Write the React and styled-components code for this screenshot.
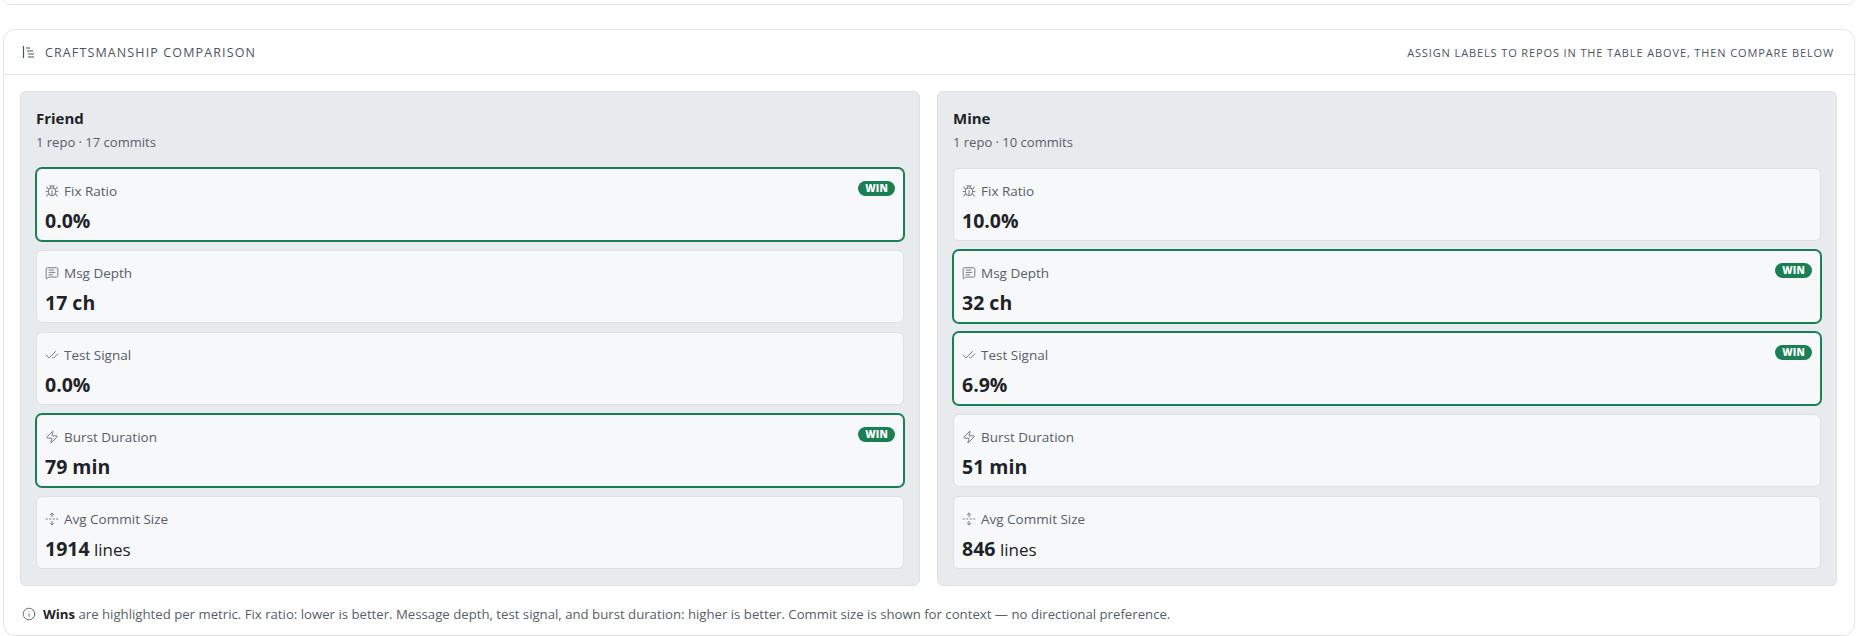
import React from "react";
import styled, { createGlobalStyle } from "styled-components";
import { Bug, MessageSquareText, CheckCheck, Zap, UnfoldVertical, Info } from "lucide-react";

const Global = createGlobalStyle`
  body { margin: 0; background: #fff; font-family: "Open Sans", "Noto Sans", sans-serif; color: #1f2328; }
`;

const Page = styled.div`
  padding: 0 11px 0 3px;
`;
const PrevCard = styled.div`
  height: 12px;
  margin-top: -9px;
  border: 1px solid #e1e4e8;
  border-radius: 12px;
`;
const Card = styled.section`
  margin-top: 24px;
  border: 1px solid #e1e4e8;
  border-radius: 12px;
  background: #fff;
`;
const Header = styled.header`
  height: 44px;
  display: flex;
  align-items: center;
  justify-content: space-between;
  padding: 0 20px 0 18px;
  border-bottom: 1px solid #e1e4e8;
`;
const HeaderTitle = styled.div`
  display: flex;
  align-items: center;
  gap: 9px;
  font-size: 12.5px;
  letter-spacing: 0.09em;
  text-transform: uppercase;
  color: #4b5563;
  font-weight: 500;
`;
const HeaderHint = styled.div`
  font-size: 11px;
  letter-spacing: 0.08em;
  text-transform: uppercase;
  color: #4b5563;
  font-weight: 500;
`;
const Body = styled.div`
  padding: 16px 17px 0 16px;
`;
const Columns = styled.div`
  display: grid;
  grid-template-columns: 1fr 1fr;
  gap: 17px;
`;
const Panel = styled.div`
  background: #e8ebee;
  border: 1px solid #dde1e5;
  border-radius: 6px;
  padding: 16px 15px 16px;
`;
const PanelTitle = styled.div`
  font-size: 15px;
  font-weight: 700;
  line-height: 20px;
  color: #1f2328;
`;
const PanelSub = styled.div`
  font-size: 13px;
  color: #57606a;
  line-height: 18px;
  margin-top: 5px;
  margin-bottom: 17px;
`;
const Metrics = styled.div`
  display: flex;
  flex-direction: column;
  gap: 9px;
`;
const Metric = styled.div`
  position: relative;
  box-sizing: border-box;
  height: 73px;
  padding: 12px 8px 0 8px;
  background: #f6f8fa;
  border-radius: 6px;
  border: 1px solid ${(p) => (p.$win ? "#1a7f52" : "#dde1e5")};
  box-shadow: ${(p) => (p.$win ? "0 0 0 1px #1a7f52" : "none")};
`;
const Label = styled.div`
  display: flex;
  align-items: center;
  gap: 5px;
  font-size: 13.5px;
  color: #57606a;
  line-height: 20px;
  svg { color: #6b7280; }
`;
const Value = styled.div`
  margin-top: 5px;
  font-size: 19.5px;
  font-weight: 700;
  color: #1f2328;
  line-height: 30px;
  span { font-weight: 400; font-size: 17px; }
`;
const Badge = styled.span`
  position: absolute;
  top: 12px;
  right: 8px;
  background: #1a7f52;
  color: #fff;
  font-size: 10px;
  font-weight: 800;
  line-height: 15px;
  padding: 0 7px;
  border-radius: 8px;
  letter-spacing: 0.02em;
`;
const Footer = styled.div`
  display: flex;
  align-items: center;
  gap: 7px;
  padding: 19px 0 12px 2px;
  font-size: 13.2px;
  line-height: 18px;
  color: #57606a;
  b { color: #1f2328; font-weight: 700; }
`;

const HeaderIcon = () => (
  <svg width="14" height="14" viewBox="0 0 14 14" fill="none" stroke="#4b5563" strokeWidth="1.2">
    <path d="M1.5 1v12" />
    <path d="M4 3h4M5 6h6M6 9h6M6 12h6" />
  </svg>
);

const icons = {
  bug: Bug,
  msg: MessageSquareText,
  test: CheckCheck,
  burst: Zap,
  size: UnfoldVertical,
};

const data = [
  {
    name: "Friend",
    sub: "1 repo · 17 commits",
    metrics: [
      { icon: "bug", label: "Fix Ratio", value: "0.0%", win: true },
      { icon: "msg", label: "Msg Depth", value: "17 ch" },
      { icon: "test", label: "Test Signal", value: "0.0%" },
      { icon: "burst", label: "Burst Duration", value: "79 min", win: true },
      { icon: "size", label: "Avg Commit Size", value: "1914", unit: "lines" },
    ],
  },
  {
    name: "Mine",
    sub: "1 repo · 10 commits",
    metrics: [
      { icon: "bug", label: "Fix Ratio", value: "10.0%" },
      { icon: "msg", label: "Msg Depth", value: "32 ch", win: true },
      { icon: "test", label: "Test Signal", value: "6.9%", win: true },
      { icon: "burst", label: "Burst Duration", value: "51 min" },
      { icon: "size", label: "Avg Commit Size", value: "846", unit: "lines" },
    ],
  },
];

export default function App() {
  return (
    <Page>
      <Global />
      <PrevCard />
      <Card>
        <Header>
          <HeaderTitle>
            <HeaderIcon />
            Craftsmanship Comparison
          </HeaderTitle>
          <HeaderHint>Assign labels to repos in the table above, then compare below</HeaderHint>
        </Header>
        <Body>
          <Columns>
            {data.map((p) => (
              <Panel key={p.name}>
                <PanelTitle>{p.name}</PanelTitle>
                <PanelSub>{p.sub}</PanelSub>
                <Metrics>
                  {p.metrics.map((m) => {
                    const Icon = icons[m.icon];
                    return (
                      <Metric key={m.label} $win={m.win}>
                        <Label>
                          <Icon size={14} strokeWidth={1.6} />
                          {m.label}
                        </Label>
                        <Value>
                          {m.value}
                          {m.unit && <span> {m.unit}</span>}
                        </Value>
                        {m.win && <Badge>WIN</Badge>}
                      </Metric>
                    );
                  })}
                </Metrics>
              </Panel>
            ))}
          </Columns>
          <Footer>
            <Info size={14} strokeWidth={1.5} color="#57606a" />
            <div>
              <b>Wins</b> are highlighted per metric. Fix ratio: lower is better. Message depth, test signal, and burst duration: higher is better. Commit size is shown for context — no directional preference.
            </div>
          </Footer>
        </Body>
      </Card>
    </Page>
  );
}
